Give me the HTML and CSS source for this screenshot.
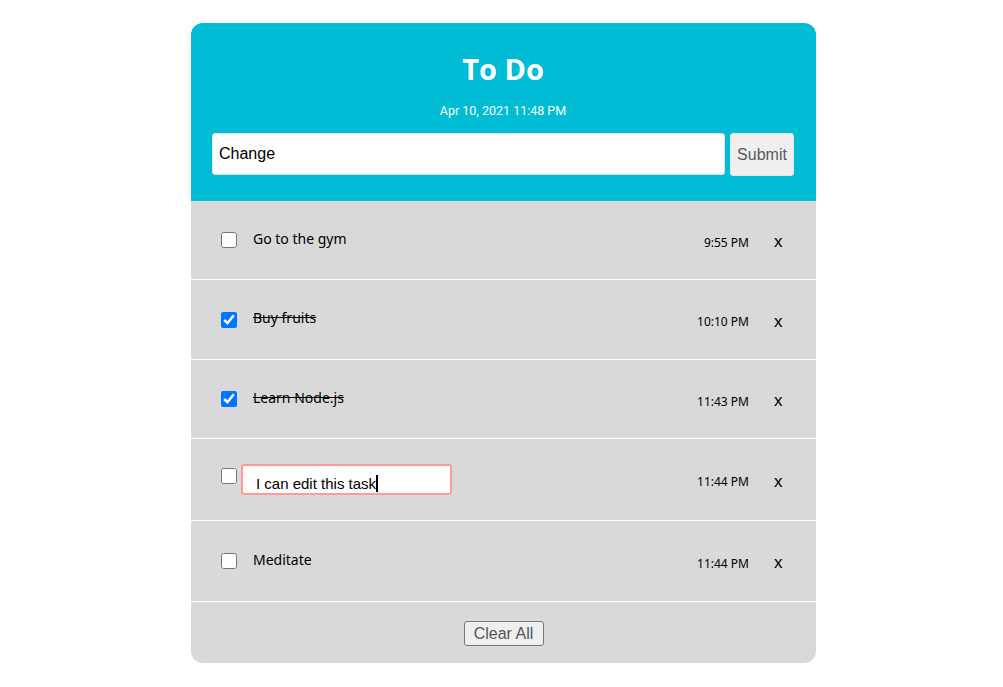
FILE: index.html
```html
<!DOCTYPE html>
<html>
<head>
<meta charset="utf-8">
<link rel="stylesheet" href="styles.css">
</head>
<body>
<div class="app">
  <header class="head">
    <h1 class="title">To Do</h1>
    <div class="date">Apr 10, 2021 11:48 PM</div>
    <form class="add">
      <input class="add-input" type="text" value="Change">
      <button class="add-btn" type="button">Submit</button>
    </form>
  </header>
  <ul class="list">
    <li class="row">
      <input class="check" type="checkbox">
      <span class="task">Go to the gym</span>
      <span class="time">9:55 PM</span>
      <span class="del">x</span>
    </li>
    <li class="row row-tall">
      <input class="check" type="checkbox" checked>
      <span class="task done">Buy fruits</span>
      <span class="time">10:10 PM</span>
      <span class="del">x</span>
    </li>
    <li class="row">
      <input class="check" type="checkbox" checked>
      <span class="task done">Learn Node.js</span>
      <span class="time">11:43 PM</span>
      <span class="del">x</span>
    </li>
    <li class="row row-edit">
      <input class="check" type="checkbox">
      <span class="edit"><span class="edit-text">I can edit this task</span><span class="caret"></span></span>
      <span class="time">11:44 PM</span>
      <span class="del">x</span>
    </li>
    <li class="row row-last">
      <input class="check" type="checkbox">
      <span class="task">Meditate</span>
      <span class="time">11:44 PM</span>
      <span class="del">x</span>
    </li>
  </ul>
  <div class="foot">
    <button class="clear" type="button">Clear All</button>
  </div>
</div>
</body>
</html>
```
FILE: styles.css
```css
html, body { margin: 0; padding: 0; background: #fff; }
body { padding: 23px 0 0 191px; font-family: "Noto Sans", sans-serif; }
.app {
  width: 625px;
  border-radius: 12px;
  overflow: hidden;
  background: #d9d9d9;
}
.head {
  background: #00bcd4;
  height: 178px;
  box-sizing: border-box;
  padding: 27px 22px 0 21px;
  text-align: center;
  color: #fff;
}
.title {
  margin: 0;
  font-family: "Open Sans", sans-serif;
  font-weight: 700;
  font-size: 29px;
  line-height: 38px;
}
.date {
  margin-top: 16px;
  font-family: Roboto, sans-serif;
  font-size: 12.5px;
  line-height: 14px;
}
.add {
  display: flex;
  gap: 5px;
  margin-top: 15px;
}
.add-input {
  flex: 1;
  height: 42px;
  box-sizing: border-box;
  border: 1px solid #e0e0e0;
  border-radius: 3px;
  padding: 0 6px;
  font-family: "Liberation Sans", Arial, sans-serif;
  font-size: 16px;
  color: #000;
  outline: none;
}
.add-btn {
  width: 64px;
  height: 43px;
  box-sizing: border-box;
  border: 1px solid #e6e6e6;
  border-radius: 3px;
  background: #efefef;
  color: #5a5a5a;
  font-family: "Liberation Sans", Arial, sans-serif;
  font-size: 16px;
  padding: 0;
}
.list { list-style: none; margin: 0; padding: 0; }
.row {
  display: flex;
  align-items: center;
  height: 78px;
  padding: 0 32px 0 30px;
  border-bottom: 1px solid #fff;
  font-size: 14px;
  color: #000;
}
.row-tall { height: 79px; }
.row-edit { height: 81px; }
.row-last { height: 80px; }
.check {
  width: 16px;
  height: 16px;
  margin: 0 16px 0 0;
  accent-color: #0075ff;
}
.row-edit .check { margin: -8px 4px 0 0; }
.task { flex: 1; margin-top: -4px; }
.done { text-decoration: line-through; }
.edit {
  flex: 0 0 auto;
  width: 211px;
  height: 31px;
  box-sizing: border-box;
  border: 2px solid #ff9a9a;
  border-radius: 3px;
  background: #fff;
  display: flex;
  align-items: center;
  padding: 7px 0 0 13px;
  font-family: "Liberation Sans", Arial, sans-serif;
  font-size: 15px;
  margin-right: auto;
}
.caret { display: inline-block; width: 2px; height: 17px; background: #000; margin-left: 0; }
.time { font-size: 12px; margin-top: 4px; }
.del {
  margin-left: 25px;
  width: 10px;
  font-family: "Liberation Sans", Arial, sans-serif;
  font-size: 17px;
  margin-top: 4px;
}
.foot {
  height: 61px;
  display: flex;
  justify-content: center;
  padding-top: 19px;
  box-sizing: border-box;
}
.clear {
  height: 25px;
  width: 80px;
  box-sizing: border-box;
  border: 1px solid #767676;
  border-radius: 3px;
  background: #efefef;
  color: #555;
  font-family: "Liberation Sans", Arial, sans-serif;
  font-size: 16px;
  padding: 0;
}
```
